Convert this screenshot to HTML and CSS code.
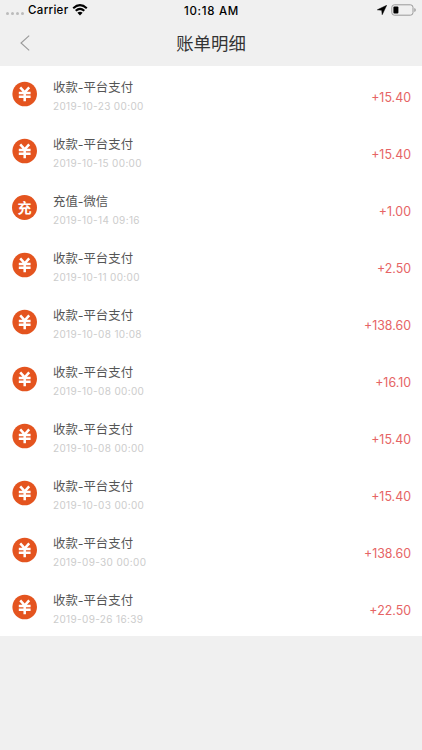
FILE: index.html
```html
<!DOCTYPE html>
<html lang="zh-CN">
  <head>
    <meta charset="UTF-8" />
    <meta name="viewport" content="width=device-width, initial-scale=1.0" />
    <title>账单明细</title>
    <link rel="stylesheet" href="styles.css">
  </head>
  <body>
    <svg class="defs" width="0" height="0">
      <symbol id="yen" viewBox="0 0 26 26">
        <circle cx="12.7" cy="13" r="12.3" fill="#e4541f" />
        <path d="M8.2 6.4 L12.7 11.4 L17.2 6.4 M12.7 10.5 V20.2 M6.8 12 H18.6 M6.8 15.8 H18.6" fill="none" stroke="#fff" stroke-width="2.5" />
      </symbol>
    </svg>

    <div class="status-bar">
      <div class="status-left">
        <span class="dots"><i></i><i></i><i></i><i></i></span>
        <span class="carrier">Carrier</span>
        <svg class="wifi" width="16" height="12" viewBox="0 0 16 12">
          <path d="M1.2 4.2 Q8 -1.8 14.8 4.2 M3.7 6.8 Q8 3 12.3 6.8" fill="none" stroke="#000" stroke-width="2.1" />
          <path d="M5.4 8.7 Q8 6.6 10.6 8.7 L8 11.4 Z" />
        </svg>
      </div>
      <span class="time">10:18 AM</span>
      <div class="status-right">
        <svg width="10" height="10" viewBox="0 0 10 10">
          <path d="M9.7 .3 L.3 4.8 L4.7 5.3 L5.2 9.7 Z" stroke="#000" stroke-width=".5" stroke-linejoin="round" />
        </svg>
        <svg width="26" height="12" viewBox="0 0 26 12">
          <rect x=".8" y=".8" width="21.2" height="10.4" rx="2.6" fill="none" stroke="#999" />
          <rect x="2.4" y="2.4" width="5" height="7.2" rx="1" />
          <path d="M23.3 4 Q24.8 4.5 24.8 6 Q24.8 7.5 23.3 8 Z" fill="#999" />
        </svg>
      </div>
    </div>

    <header class="nav">
      <svg class="back" width="10" height="16" viewBox="0 0 10 16">
        <path d="M9.2 .7 L1 8 L9.2 15.3" fill="none" stroke="#999" stroke-width="1.1" />
      </svg>
      <h1>账单明细</h1>
    </header>

    <ul class="bills">
      <li class="bill">
        <svg class="icon"><use href="#yen" /></svg>
        <div class="info"><p class="name">收款-平台支付</p><p class="date">2019-10-23 00:00</p></div>
        <span class="amount">+15.40</span>
      </li>
      <li class="bill">
        <svg class="icon"><use href="#yen" /></svg>
        <div class="info"><p class="name">收款-平台支付</p><p class="date">2019-10-15 00:00</p></div>
        <span class="amount">+15.40</span>
      </li>
      <li class="bill">
        <span class="icon recharge">充</span>
        <div class="info"><p class="name">充值-微信</p><p class="date">2019-10-14 09:16</p></div>
        <span class="amount">+1.00</span>
      </li>
      <li class="bill">
        <svg class="icon"><use href="#yen" /></svg>
        <div class="info"><p class="name">收款-平台支付</p><p class="date">2019-10-11 00:00</p></div>
        <span class="amount">+2.50</span>
      </li>
      <li class="bill">
        <svg class="icon"><use href="#yen" /></svg>
        <div class="info"><p class="name">收款-平台支付</p><p class="date">2019-10-08 10:08</p></div>
        <span class="amount">+138.60</span>
      </li>
      <li class="bill">
        <svg class="icon"><use href="#yen" /></svg>
        <div class="info"><p class="name">收款-平台支付</p><p class="date">2019-10-08 00:00</p></div>
        <span class="amount">+16.10</span>
      </li>
      <li class="bill">
        <svg class="icon"><use href="#yen" /></svg>
        <div class="info"><p class="name">收款-平台支付</p><p class="date">2019-10-08 00:00</p></div>
        <span class="amount">+15.40</span>
      </li>
      <li class="bill">
        <svg class="icon"><use href="#yen" /></svg>
        <div class="info"><p class="name">收款-平台支付</p><p class="date">2019-10-03 00:00</p></div>
        <span class="amount">+15.40</span>
      </li>
      <li class="bill">
        <svg class="icon"><use href="#yen" /></svg>
        <div class="info"><p class="name">收款-平台支付</p><p class="date">2019-09-30 00:00</p></div>
        <span class="amount">+138.60</span>
      </li>
      <li class="bill">
        <svg class="icon"><use href="#yen" /></svg>
        <div class="info"><p class="name">收款-平台支付</p><p class="date">2019-09-26 16:39</p></div>
        <span class="amount">+22.50</span>
      </li>
    </ul>
  </body>
</html>
```
FILE: styles.css
```css
* {
  box-sizing: border-box;
  margin: 0;
  padding: 0;
}

body {
  font-family: Inter, "Noto Sans CJK SC", sans-serif;
  background-color: #f0f0f0;
  min-height: 100vh;
}

.defs {
  display: block;
}

.status-bar {
  display: grid;
  grid-template-columns: 1fr auto 1fr;
  align-items: center;
  height: 20px;
  padding: 0 5px 0 6px;
  font-size: 11.5px;
  font-weight: 500;
  color: #000;
}

.status-left,
.status-right {
  display: flex;
  align-items: center;
}

.status-right {
  justify-content: flex-end;
  gap: 4px;
}

.dots {
  display: flex;
  gap: 1.5px;
  margin: 7px 4px 0 0;
}

.dots i {
  width: 3.4px;
  height: 3.4px;
  border-radius: 50%;
  background-color: #bbb;
}

.carrier {
  letter-spacing: 0.3px;
}

.time {
  padding-top: 1px;
  letter-spacing: 0.7px;
}

.wifi {
  margin-left: 4px;
}

.nav {
  display: grid;
  grid-template-columns: 1fr auto 1fr;
  align-items: center;
  height: 46px;
  padding: 0 20px;
}

.nav h1 {
  padding-top: 2px;
  font-size: 17.4px;
  font-weight: 400;
  line-height: 26px;
  color: #333;
}

.bills {
  list-style: none;
  background-color: #fff;
}

.bill {
  display: flex;
  align-items: center;
  height: 57px;
  padding: 0 11px 0 12px;
}

.icon {
  flex: none;
  width: 26px;
  height: 26px;
  margin-bottom: 2px;
}

.recharge {
  display: flex;
  align-items: center;
  justify-content: center;
  width: 25px;
  height: 25px;
  margin-right: 1px;
  border-radius: 50%;
  background-color: #e4541f;
  color: #fff;
  font-size: 14px;
  font-weight: 700;
  line-height: 24px;
}

.info {
  flex: 1;
  margin: 3px 0 0 15px;
}

.name {
  font-size: 12.4px;
  line-height: 20px;
  color: #555;
}

.date {
  font-size: 10px;
  line-height: 17px;
  letter-spacing: 0.35px;
  color: #ccc;
}

.amount {
  margin-top: 6px;
  font-size: 12.4px;
  line-height: 18px;
  color: #e66465;
}
```
